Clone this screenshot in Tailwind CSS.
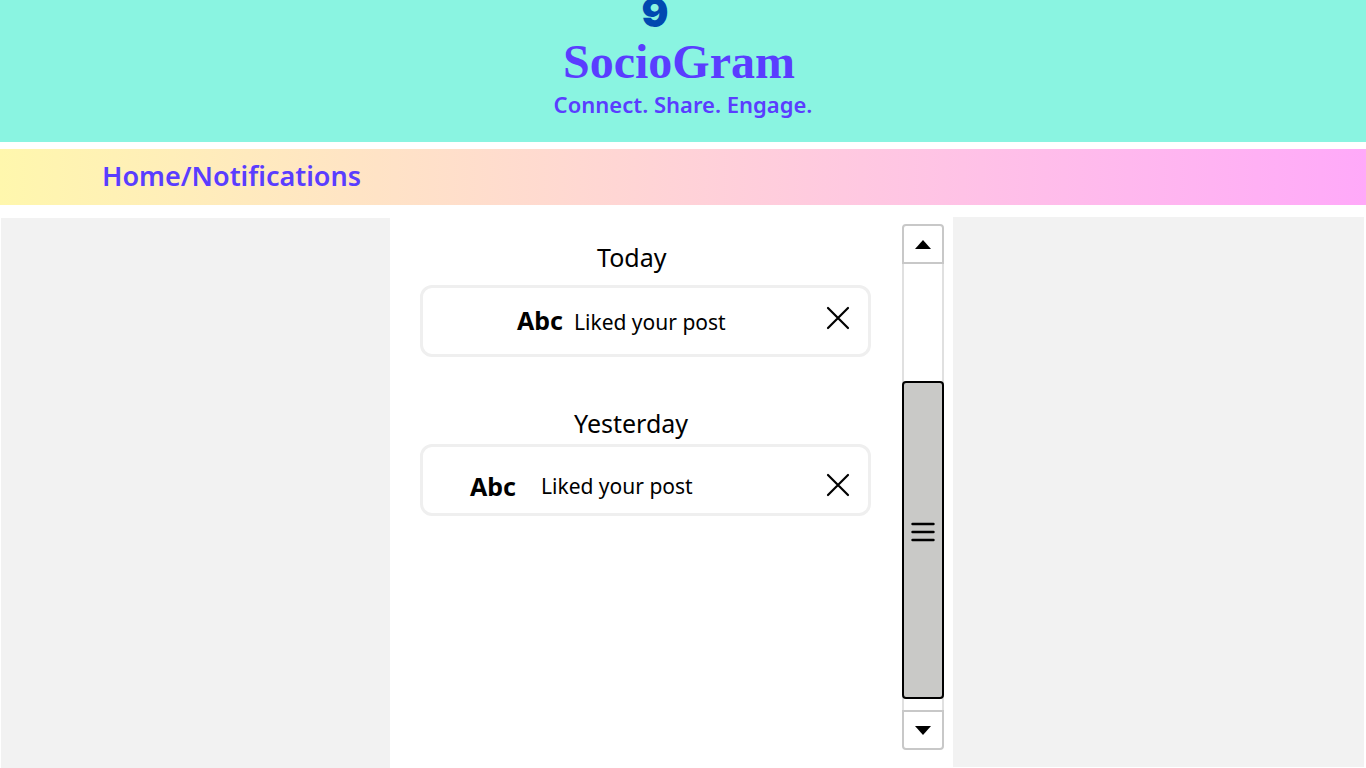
<!DOCTYPE html>
<html lang="en">
<head>
<meta charset="utf-8">
<meta name="viewport" content="width=device-width, initial-scale=1">
<title>SocioGram – Notifications</title>
<script src="https://cdn.jsdelivr.net/npm/@tailwindcss/browser@4"></script>
</head>
<body class="flex min-h-screen flex-col bg-white font-['Noto_Sans',sans-serif] text-black">
  <header class="flex flex-col items-center overflow-hidden bg-[#8af4e1] pb-6 text-[#5a3dff]">
    <div class="-mt-[7px] mr-14 h-10 font-['Inter',sans-serif] text-[40px] leading-10 font-black text-[#0049b0]">9</div>
    <h1 class="mr-2 font-['Liberation_Serif',serif] text-[48px] leading-[57px] font-bold">SocioGram</h1>
    <p class="text-[22px] leading-7 font-semibold">Connect. Share. Engage.</p>
  </header>

  <nav aria-label="Breadcrumb" class="mt-[7px] flex h-14 items-center bg-linear-to-r from-[#fff7ad] to-[#ffa9f9] pb-0.5 pl-[102px] text-[27px] font-semibold text-[#5a3dff]">
    <a href="#home">Home</a><span>/</span><a href="#notifications">Notifications</a>
  </nav>

  <main class="mt-3 grid flex-1 grid-cols-[389fr_563fr_411fr] pr-0.5 pl-px">
    <aside class="mt-px bg-[#f2f2f2]"></aside>

    <div class="flex pt-[7px] pr-[9px] pl-[30px]">
      <div class="flex-1">
        <section>
          <h2 class="mt-[15px] pl-[177px] text-[25px] leading-9">Today</h2>
          <article class="mt-[10px] flex h-[72px] items-center rounded-xl border-3 border-[#efefef] pr-[18px] pl-[94px]">
            <strong class="text-[25px] font-bold">Abc</strong>
            <span class="mt-1 ml-[11px] text-[21px]">Liked your post</span>
            <button type="button" aria-label="Dismiss notification" class="mb-[7px] ml-auto">
              <svg class="size-6" viewBox="0 0 24 24" fill="none" stroke="currentColor" stroke-width="2.2" stroke-linecap="round"><path d="M2 2l20 20M22 2L2 22"/></svg>
            </button>
          </article>
        </section>
        <section>
          <h2 class="mt-12 pl-[154px] text-[25px] leading-9">Yesterday</h2>
          <article class="mt-[3px] flex h-[72px] items-center rounded-xl border-3 border-[#efefef] pr-[18px] pl-[47px]">
            <strong class="mt-[14px] text-[25px] font-bold">Abc</strong>
            <span class="mt-[14px] ml-[25px] text-[21px]">Liked your post</span>
            <button type="button" aria-label="Dismiss notification" class="mt-[9px] ml-auto">
              <svg class="size-6" viewBox="0 0 24 24" fill="none" stroke="currentColor" stroke-width="2.2" stroke-linecap="round"><path d="M2 2l20 20M22 2L2 22"/></svg>
            </button>
          </article>
        </section>
      </div>

      <div class="mb-[18px] ml-[31px] flex w-[42px] flex-col">
        <button type="button" aria-label="Scroll up" class="flex h-10 items-center justify-center rounded-t-sm border-2 border-[#c8c8c8]">
          <svg class="h-[9px] w-4" viewBox="0 0 16 9"><path d="M8 0l8 9H0z"/></svg>
        </button>
        <div class="flex flex-1 flex-col border-x-2 border-[#e0e0e0] pt-[117px] pb-[11px]">
          <div class="-mx-0.5 flex flex-1 flex-col items-center justify-center rounded-sm border-2 border-black bg-[#c9c9c7]">
            <svg class="mt-[-16px] h-5 w-6" viewBox="0 0 24 20" stroke="black" stroke-width="2.4" stroke-linecap="round"><path d="M1.500 2h21M1.500 10h21M1.500 18h21"/></svg>
          </div>
        </div>
        <button type="button" aria-label="Scroll down" class="flex h-10 items-center justify-center rounded-b-sm border-2 border-[#c8c8c8]">
          <svg class="h-[9px] w-4" viewBox="0 0 16 9"><path d="M0 0h16L8 9z"/></svg>
        </button>
      </div>
    </div>

    <aside class="mb-px bg-[#f2f2f2]"></aside>
  </main>
</body>
</html>
